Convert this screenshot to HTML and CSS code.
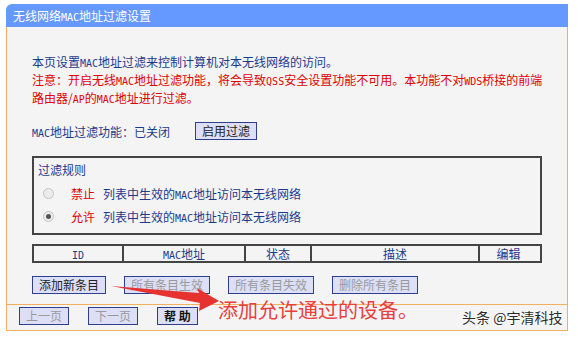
FILE: index.html
```html
<!DOCTYPE html>
<html lang="zh-CN">
<head>
  <meta charset="UTF-8">
  <title>无线网络MAC地址过滤设置</title>
  <link rel="stylesheet" href="styles.css">
</head>
<body>
  <div id="panel">
    <div class="panel-title">无线网络<span class="en">MAC</span>地址过滤设置</div>

    <div class="panel-body">
      <p class="intro">本页设置<span class="en">MAC</span>地址过滤来控制计算机对本无线网络的访问。</p>
      <p class="warn">注意：开启无线<span class="en">MAC</span>地址过滤功能，将会导致<span class="en">QSS</span>安全设置功能不可用。本功能不对<span class="en">WDS</span>桥接的前端<br>路由器/<span class="en">AP</span>的<span class="en">MAC</span>地址进行过滤。</p>

      <div class="status-row">
        <span class="status-label"><span class="en">MAC</span>地址过滤功能：已关闭</span>
        <button class="btn">启用过滤</button>
      </div>

      <div class="rule-box">
        <div class="rule-title">过滤规则</div>
        <div class="rule-list">
          <div class="rule-row">
            <span class="radio"></span>
            <span class="rule-key">禁止</span>
            <span>列表中生效的<span class="en">MAC</span>地址访问本无线网络</span>
          </div>
          <div class="rule-row">
            <span class="radio checked"></span>
            <span class="rule-key">允许</span>
            <span>列表中生效的<span class="en">MAC</span>地址访问本无线网络</span>
          </div>
        </div>
      </div>

      <div class="list-head">
        <div class="col col-id"><span class="en">ID</span></div>
        <div class="col col-mac"><span class="en">MAC</span>地址</div>
        <div class="col col-state">状态</div>
        <div class="col col-desc">描述</div>
        <div class="col col-edit">编辑</div>
      </div>

      <div class="btn-row">
        <button class="btn">添加新条目</button>
        <button class="btn disabled">所有条目生效</button>
        <button class="btn disabled">所有条目失效</button>
        <button class="btn disabled">删除所有条目</button>
      </div>
    </div>

    <div class="panel-foot">
      <button class="btn disabled">上一页</button>
      <button class="btn disabled">下一页</button>
      <button class="btn help">帮 助</button>
    </div>
  </div>

  <!-- annotation drawn over the screenshot -->
  <svg class="arrow" width="578" height="338" viewBox="0 0 578 338">
    <polygon points="111,286 199,293 197,288 219,301 199,311 200,303" fill="#e6332f"/>
  </svg>
  <div class="note">添加允许通过的设备。</div>
  <div class="watermark">头条 @宇清科技</div>
</body>
</html>
```

FILE: styles.css
```css
body {
  margin: 0;
  background: #ffffff;
  font-family: "Noto Sans CJK SC", "Liberation Sans", sans-serif;
  font-size: 12px;
  position: relative;
  width: 578px;
  height: 338px;
  overflow: hidden;
}
.en {
  font-family: "DejaVu Sans Mono", monospace;
  font-size: 10px;
  line-height: 1;
}
#panel {
  margin: 4px 0 0 6px;
  width: 562px;
}
.panel-title {
  height: 23px;
  line-height: 23px;
  padding-left: 7px;
  background: #6699ff;
  color: #ffffff;
  font-size: 12px;
  border-top-left-radius: 6px;
}
.panel-body {
  background: #f4f4f4;
  border-left: 1px solid #f0b060;
  border-right: 1px solid #f0b060;
  padding: 26px 25px 10px 25px;
  color: #1c3a8c;
}
p {
  margin: 0;
  line-height: 18px;
}
.intro {
  height: 18px;
}
.warn {
  color: #e00000;
  white-space: nowrap;
  height: 36px;
}
.status-row {
  display: flex;
  align-items: center;
  margin-top: 15px;
  height: 18px;
}
.status-label {
  width: 163px;
}
.btn {
  font-family: "Noto Sans CJK SC", "Liberation Sans", sans-serif;
  font-size: 12px;
  height: 18px;
  line-height: 16px;
  padding: 0 6px;
  margin: 0;
  border: 1px solid #2f3f8f;
  background: #dcdff5;
  color: #222222;
  cursor: pointer;
}
.btn.disabled {
  color: #9a9a9a;
}
.btn.help {
  font-weight: bold;
  color: #111111;
}
.rule-box {
  margin-top: 16px;
  border: 2px solid #444444;
  padding: 3px 4px 5px 4px;
}
.rule-title {
  line-height: 18px;
  height: 18px;
}
.rule-list {
  margin-top: 3px;
}
.rule-row {
  display: flex;
  align-items: center;
  height: 23px;
}
.radio {
  width: 9px;
  height: 9px;
  margin: 0 17px 0 5px;
  border: 1px solid #c4c4c4;
  border-radius: 50%;
  background: #ececec;
  box-sizing: content-box;
  position: relative;
}
.radio.checked::after {
  content: "";
  position: absolute;
  left: 2px;
  top: 2px;
  width: 5px;
  height: 5px;
  border-radius: 50%;
  background: #555555;
}
.rule-key {
  color: #e00000;
  margin-right: 8px;
}
.list-head {
  display: grid;
  grid-template-columns: 88px 122px 66px 168px 59px;
  margin-top: 9px;
  border: 2px solid #444444;
}
.col {
  text-align: center;
  line-height: 15px;
  height: 15px;
  border-left: 2px solid #444444;
}
.col-id {
  border-left: none;
}
.btn-row {
  display: flex;
  gap: 18px;
  margin-top: 13px;
}
.panel-foot {
  display: flex;
  gap: 19px;
  border: 1px solid #f0b060;
  background: #f4f4f4;
  padding: 2px 12px 5px 12px;
}
.arrow {
  position: absolute;
  left: 0;
  top: 0;
  pointer-events: none;
}
.note {
  position: absolute;
  left: 218px;
  top: 297px;
  font-size: 20px;
  line-height: 26px;
  color: #e8403c;
}
.watermark {
  position: absolute;
  left: 462px;
  top: 308px;
  font-size: 14px;
  line-height: 18px;
  color: #2a2a2a;
  text-shadow: 0 0 3px #ffffff, 0 0 3px #ffffff;
}
```
